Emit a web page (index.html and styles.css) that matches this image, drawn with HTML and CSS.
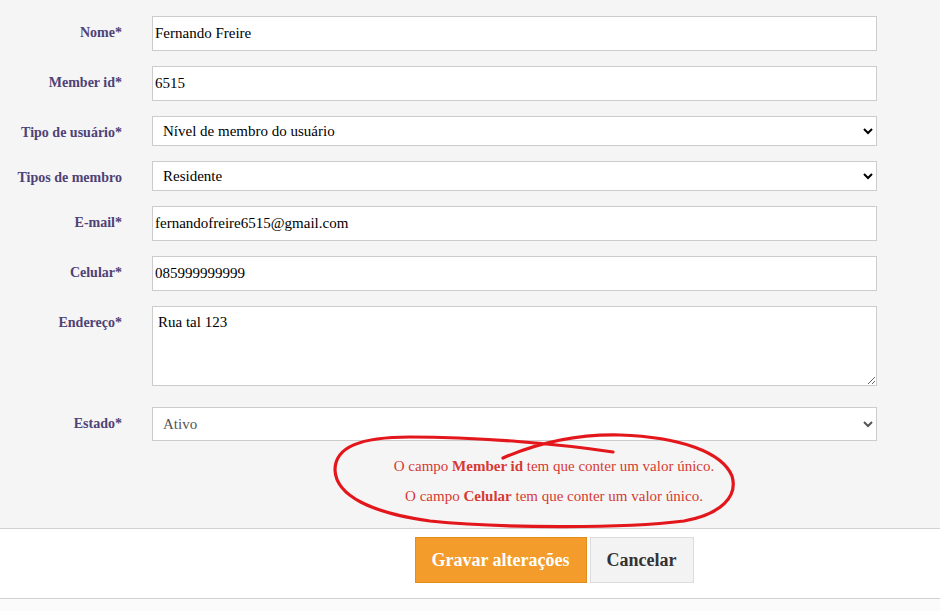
FILE: index.html
```html
<!DOCTYPE html>
<html lang="pt">
<head>
<meta charset="utf-8">
<title>Editar membro</title>
<link rel="stylesheet" href="styles.css">
</head>
<body>
<div class="page">
  <form class="form">
    <div class="row">
      <label class="lbl">Nome*</label>
      <input class="field" type="text" value="Fernando Freire">
    </div>
    <div class="row">
      <label class="lbl">Member id*</label>
      <input class="field" type="text" value="6515">
    </div>
    <div class="row">
      <label class="lbl">Tipo de usuário*</label>
      <select class="sel"><option>Nível de membro do usuário</option></select>
    </div>
    <div class="row">
      <label class="lbl">Tipos de membro</label>
      <select class="sel"><option>Residente</option></select>
    </div>
    <div class="row">
      <label class="lbl">E-mail*</label>
      <input class="field" type="text" value="fernandofreire6515@gmail.com">
    </div>
    <div class="row">
      <label class="lbl">Celular*</label>
      <input class="field" type="text" value="085999999999">
    </div>
    <div class="row row-area">
      <label class="lbl">Endereço*</label>
      <textarea class="area">Rua tal 123</textarea>
    </div>
    <div class="row">
      <label class="lbl">Estado*</label>
      <select class="sel sel-state"><option>Ativo</option></select>
    </div>
    <div class="errors">
      <p class="err">O campo <b>Member id</b> tem que conter um valor único.</p>
      <p class="err">O campo <b>Celular</b> tem que conter um valor único.</p>
    </div>
  </form>
  <div class="footer">
    <div class="actions">
      <button class="btn btn-save" type="button">Gravar alterações</button>
      <button class="btn btn-cancel" type="button">Cancelar</button>
    </div>
  </div>
  <div class="bottom"></div>
  <svg class="scribble" width="940" height="611" viewBox="0 0 940 611">
    <path d="M 503 458 C 540 442, 578 434, 620 435 C 680 437, 722 452, 732 476 C 738 496, 722 514, 684 521 C 620 529, 500 528, 430 521 C 372 513, 336 496, 335 470 C 335 447, 360 437, 410 437 C 480 437, 560 444, 613 452" fill="none" stroke="#e3161b" stroke-width="3.2" stroke-linecap="round"/>
  </svg>
</div>
</body>
</html>
```
FILE: styles.css
```css
* { box-sizing: border-box; }
html, body { margin: 0; padding: 0; }
body {
  background: #f5f5f5;
  font-family: "Liberation Serif", "Times New Roman", serif;
  font-size: 14px;
  color: #000;
}
.page { position: relative; width: 940px; height: 611px; overflow: hidden; }
.form {
  padding-top: 16px;
  height: 529px;
  border-bottom: 1px solid #d2d2d2;
  display: flex;
  flex-direction: column;
}
.row {
  display: grid;
  grid-template-columns: 122px 725px;
  column-gap: 30px;
  align-items: start;
  margin-bottom: 15px;
}
.row-area { margin-bottom: 21px; }
.lbl {
  text-align: right;
  font-weight: bold;
  color: #4e4276;
  padding-top: 8px;
  line-height: 17px;
  white-space: nowrap;
}
.field {
  height: 35px;
  border: 1px solid #cccccc;
  background: #fff;
  font-family: "Liberation Serif", "Times New Roman", serif;
  font-size: 15px;
  padding: 0 2px;
  color: #000;
  margin: 0;
}
.sel {
  height: 30px;
  border: 1px solid #cccccc;
  background: #fff;
  font-family: "Liberation Serif", "Times New Roman", serif;
  font-size: 15px;
  padding: 0 6px;
  color: #000;
  margin: 0;
  border-radius: 0;
}
.sel-state { height: 34px; color: #555; }
.area {
  height: 80px;
  border: 1px solid #cccccc;
  background: #fff;
  font-family: "Liberation Serif", "Times New Roman", serif;
  font-size: 15px;
  padding: 7px 5px;
  margin: 0;
  resize: vertical;
}
.errors {
  margin-top: -5px;
  padding-left: 168px;
  text-align: center;
  color: #d63a33;
  font-size: 15px;
}
.err { margin: 0; line-height: 30px; }
.err b { font-weight: bold; }
.footer {
  background: #fff;
  height: 70px;
  border-bottom: 1px solid #d0d0d0;
  padding: 8px 0 0 168px;
}
.actions { display: flex; justify-content: center; gap: 3px; }
.btn {
  height: 46px;
  font-family: "Liberation Serif", "Times New Roman", serif;
  font-weight: bold;
  font-size: 18px;
  border-radius: 0;
  margin: 0;
  cursor: pointer;
}
.btn-save {
  width: 172px;
  background: #f39c2b;
  border: 1px solid #e38d1c;
  color: #fff;
}
.btn-cancel {
  width: 104px;
  background: #f3f3f3;
  border: 1px solid #dcdcdc;
  color: #333;
}
.bottom { background: #fbfbfb; height: 13px; }
.scribble { position: absolute; left: 0; top: 0; pointer-events: none; }
```
